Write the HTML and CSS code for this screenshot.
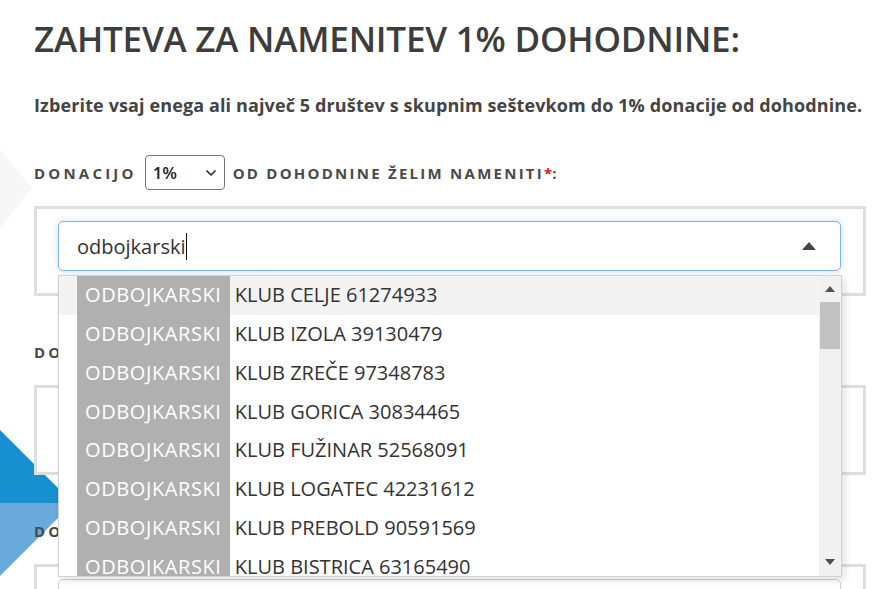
FILE: index.html
```html
<!DOCTYPE html>
<html lang="sl">
<head>
<meta charset="utf-8">
<title>Zahteva za namenitev 1% dohodnine</title>
<link rel="stylesheet" href="styles.css">
</head>
<body>
<svg class="deco" width="885" height="589" viewBox="0 0 885 589" aria-hidden="true">
  <polygon points="0,150 32,188 0,228" fill="#f7f7f7"/>
  <polygon points="-80,430 0,430 73,503 -80,503" fill="#1790d0"/>
  <polygon points="-80,503 73,503 0,576 -80,576" fill="#6aa9dc"/>
</svg>
<main class="form">
  <h1 class="title">ZAHTEVA ZA NAMENITEV 1% DOHODNINE:</h1>
  <p class="lead">Izberite vsaj enega ali največ 5 društev s skupnim seštevkom do 1% donacije od dohodnine.</p>

  <section class="group">
    <div class="label">
      <span class="word">DONACIJO</span>
      <div class="select"><span>1%</span>
        <svg class="chev" width="12" height="8" viewBox="0 0 12 8"><path d="M1.5 1.5 L6 6 L10.5 1.5" fill="none" stroke="#222" stroke-width="1.5"/></svg>
      </div>
      <span>OD DOHODNINE ŽELIM NAMENITI<span class="req">*</span>:</span>
    </div>
    <div class="box">
      <div class="combo">
        <div class="input focus">
          <span class="value">odbojkarski</span><span class="caret"></span>
          <svg class="tri" width="14" height="8" viewBox="0 0 14 8"><polygon points="0,8 7,0 14,8" fill="#444"/></svg>
        </div>
        <div class="dropdown">
          <ul class="options">
            <li class="opt active"><mark>ODBOJKARSKI</mark> KLUB CELJE 61274933</li>
            <li class="opt"><mark>ODBOJKARSKI</mark> KLUB IZOLA 39130479</li>
            <li class="opt"><mark>ODBOJKARSKI</mark> KLUB ZREČE 97348783</li>
            <li class="opt"><mark>ODBOJKARSKI</mark> KLUB GORICA 30834465</li>
            <li class="opt"><mark>ODBOJKARSKI</mark> KLUB FUŽINAR 52568091</li>
            <li class="opt"><mark>ODBOJKARSKI</mark> KLUB LOGATEC 42231612</li>
            <li class="opt"><mark>ODBOJKARSKI</mark> KLUB PREBOLD 90591569</li>
            <li class="opt"><mark>ODBOJKARSKI</mark> KLUB BISTRICA 63165490</li>
          </ul>
          <div class="scrollbar">
            <svg class="arrow up" width="10" height="6" viewBox="0 0 10 6"><polygon points="0,6 5,0 10,6" fill="#505050"/></svg>
            <div class="track"><div class="thumb"></div></div>
            <svg class="arrow down" width="10" height="6" viewBox="0 0 10 6"><polygon points="0,0 5,6 10,0" fill="#505050"/></svg>
          </div>
        </div>
      </div>
    </div>
  </section>

  <section class="group">
    <div class="label">
      <span class="word">DONACIJO</span>
      <div class="select"><span>1%</span>
        <svg class="chev" width="12" height="8" viewBox="0 0 12 8"><path d="M1.5 1.5 L6 6 L10.5 1.5" fill="none" stroke="#222" stroke-width="1.5"/></svg>
      </div>
      <span>OD DOHODNINE ŽELIM NAMENITI:</span>
    </div>
    <div class="box"><div class="input"></div></div>
  </section>

  <section class="group">
    <div class="label">
      <span class="word">DONACIJO</span>
      <div class="select"><span>1%</span>
        <svg class="chev" width="12" height="8" viewBox="0 0 12 8"><path d="M1.5 1.5 L6 6 L10.5 1.5" fill="none" stroke="#222" stroke-width="1.5"/></svg>
      </div>
      <span>OD DOHODNINE ŽELIM NAMENITI:</span>
    </div>
    <div class="box"><div class="input"></div></div>
  </section>
</main>
</body>
</html>
```

FILE: styles.css
```css
html, body {
  margin: 0;
  padding: 0;
  background: #fff;
}
body {
  font-family: "Open Sans", "DejaVu Sans", sans-serif;
  color: #444;
  overflow: hidden;
  height: 589px;
  position: relative;
}
.deco {
  position: absolute;
  left: 0;
  top: 0;
  z-index: 0;
}
.form {
  position: relative;
  z-index: 1;
  padding: 0 19px 0 34px;
}
.title {
  margin: 17px 0 0;
  font-size: 35px;
  line-height: 44px;
  font-weight: 600;
  color: #3d3d3d;
  letter-spacing: -0.2px;
  white-space: nowrap;
}
.lead {
  margin: 32px 0 0;
  font-size: 18px;
  line-height: 24px;
  font-weight: 700;
  color: #444;
  letter-spacing: 0.12px;
  white-space: nowrap;
}
.group {
  margin-top: 38px;
}
.label {
  display: flex;
  align-items: center;
  gap: 8px;
  height: 35px;
  font-size: 15px;
  font-weight: 700;
  letter-spacing: 2.25px;
  color: #4a4a4a;
  white-space: nowrap;
}
.label .word {
  letter-spacing: 3.2px;
}
.req {
  color: #e0151b;
  letter-spacing: 0;
}
.select {
  box-sizing: border-box;
  width: 80px;
  height: 35px;
  border: 1px solid #767676;
  border-radius: 4px;
  background: #fff;
  display: flex;
  align-items: center;
  justify-content: space-between;
  padding: 0 7px 0 7px;
  letter-spacing: 0;
  font-size: 17px;
  font-weight: 600;
  color: #222;
}
.box {
  margin-top: 16px;
  border: 3px solid #dedede;
  background: #fff;
  padding: 12px 22px 22px 21px;
}
.combo {
  position: relative;
}
.input {
  box-sizing: border-box;
  height: 50px;
  border: 1px solid #cfcfcf;
  border-radius: 5px;
  background: #fff;
  display: flex;
  align-items: center;
  padding: 0 24px 0 18px;
  font-size: 20px;
  color: #333;
}
.input.focus {
  border-color: #7db3e8;
  box-shadow: 0 0 7px rgba(102, 170, 235, 0.35);
}
.caret {
  display: inline-block;
  width: 1px;
  height: 27px;
  background: #111;
  margin-left: 1px;
}
.tri {
  margin-left: auto;
}
.dropdown {
  position: absolute;
  left: 0;
  right: -1px;
  top: 54px;
  height: 302px;
  box-sizing: border-box;
  border: 1px solid #d2d2d2;
  background: #fff;
  box-shadow: 3px 3px 8px rgba(0, 0, 0, 0.12);
  display: flex;
  overflow: hidden;
}
.options {
  list-style: none;
  margin: 0;
  padding: 0;
  flex: 1;
  overflow: hidden;
}
.opt {
  height: 38.85px;
  line-height: 38.85px;
  padding: 0 18px;
  font-size: 20px;
  color: #333;
  white-space: nowrap;
}
.opt.active {
  background: #f3f3f3;
}
.opt mark {
  display: inline-block;
  background: #b0b0b0;
  color: #fff;
  padding: 0 8px 0 8px;
  letter-spacing: 0.6px;
  height: 38.85px;
}
.scrollbar {
  width: 22px;
  background: #f1f1f1;
  display: flex;
  flex-direction: column;
  align-items: center;
}
.arrow {
  flex: none;
}
.arrow.up {
  margin: 10px 0 8px;
}
.arrow.down {
  margin: 8px 0 11px;
}
.track {
  flex: 1;
  width: 100%;
  padding: 2px 1px 0;
  box-sizing: border-box;
}
.thumb {
  height: 47px;
  background: #c1c1c1;
}
```
